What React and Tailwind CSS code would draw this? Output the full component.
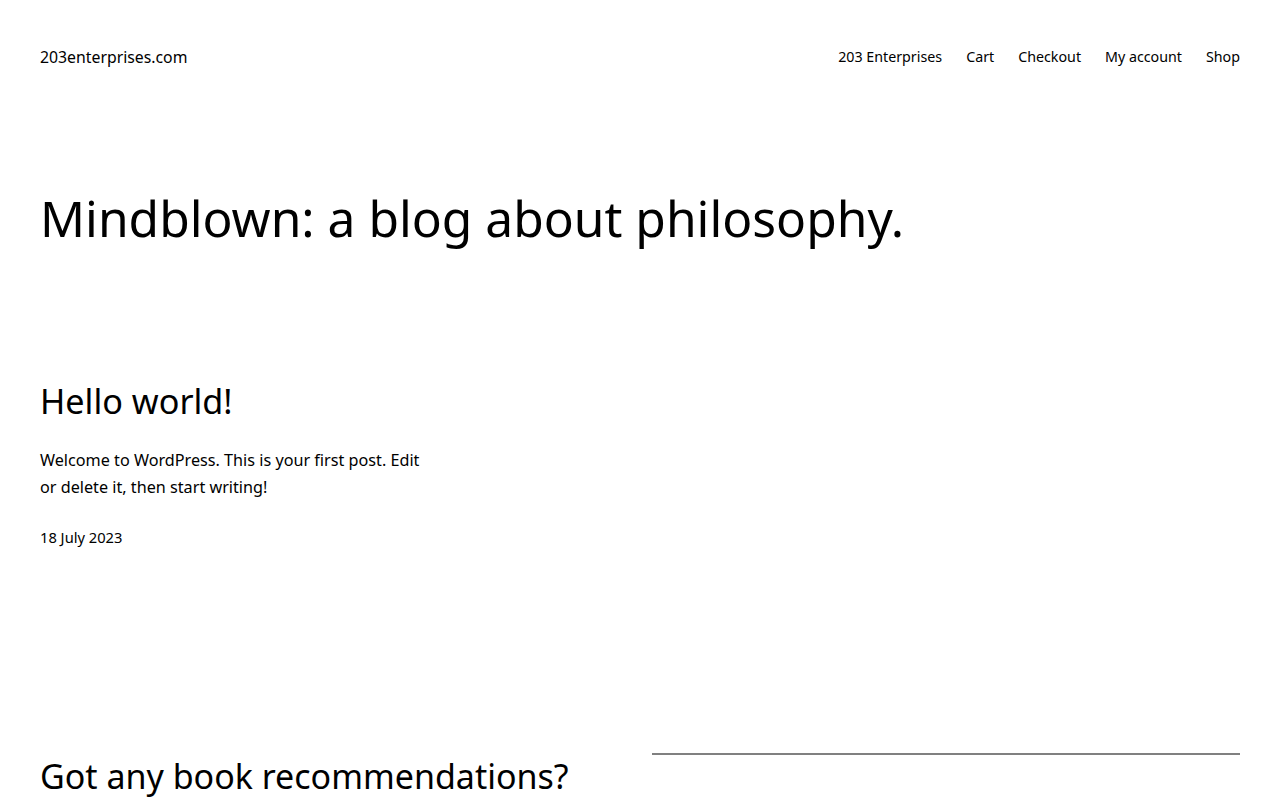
export default function App() {
  const nav = ["203 Enterprises", "Cart", "Checkout", "My account", "Shop"];
  return (
    <div className="min-h-[800px] bg-white text-black font-['Noto_Sans',sans-serif] antialiased">
      <header className="flex items-center justify-between px-10 pt-[45px]">
        <a className="text-[15.8px] leading-[24px]">203enterprises.com</a>
        <nav className="flex gap-6 text-[14.25px] leading-[24px]">
          {nav.map((n) => (
            <a key={n}>{n}</a>
          ))}
        </nav>
      </header>
      <main className="px-10">
        <h1 className="mt-[119px] text-[49.7px] leading-[60px] font-normal">
          Mindblown: a blog about philosophy.
        </h1>
        <div className="mt-[131px] grid grid-cols-3 gap-6">
          <article>
            <h2 className="text-[34.2px] leading-[44px] font-normal">Hello world!</h2>
            <p className="mt-[24px] text-[16.2px] leading-[27px]">
              Welcome to WordPress. This is your first post. Edit or delete it, then start writing!
            </p>
            <div className="mt-[25px] text-[14.7px] leading-[22px]">18 July 2023</div>
          </article>
        </div>
        <section className="mt-[206px] grid grid-cols-2 gap-6 items-start">
          <h2 className="text-[34px] leading-[44px] font-normal">Got any book recommendations?</h2>
          <div className="mt-[-1px] border-t-2 border-[#808080]" />
        </section>
      </main>
    </div>
  );
}
